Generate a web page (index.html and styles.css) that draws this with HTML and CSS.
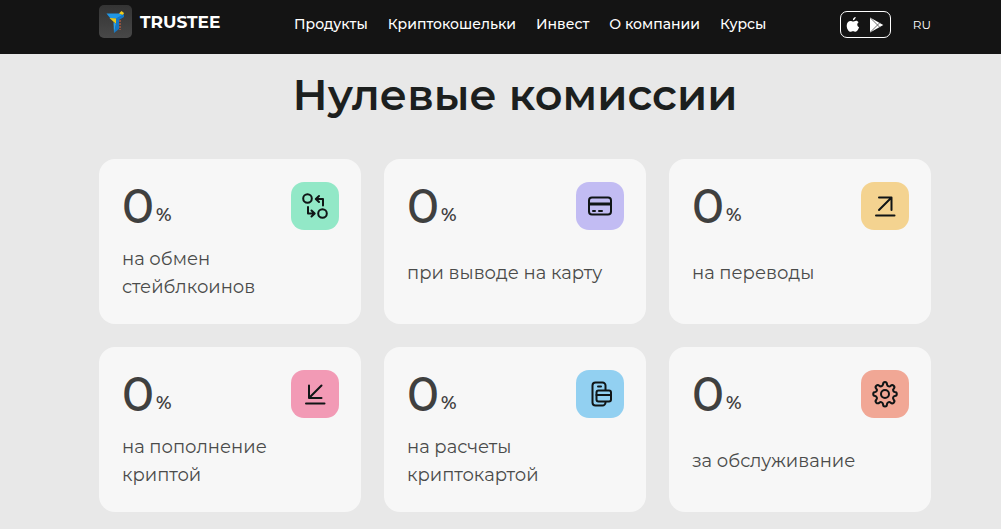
FILE: index.html
```html
<!DOCTYPE html>
<html lang="ru">
<head>
<meta charset="utf-8">
<meta name="viewport" content="width=device-width, initial-scale=1">
<title>Trustee — Нулевые комиссии</title>
<link rel="stylesheet" href="styles.css">
</head>
<body>
<header class="header">
  <a class="brand" href="#">
    <svg class="brand-logo" viewBox="0 0 33 33" aria-hidden="true">
      <defs><linearGradient id="tile" x1="0" y1="0" x2="0" y2="1"><stop offset="0" stop-color="#343434"/><stop offset="1" stop-color="#484848"/></linearGradient></defs>
      <rect width="33" height="33" rx="5" fill="url(#tile)"/>
      <path d="M7.500 8.500H20l4.500 1.500-7 3.500h-6z" fill="#2196e3"/>
      <path d="M20 8.500l2.500-2.500 2.500 2-1 2z" fill="#f2cf1d"/>
      <path d="M10.500 13l7.500.5-1 5.500z" fill="#e9c81c"/>
      <path d="M17 13.500l8-4.500v3l-5 3v9l-5 4 2-9z" fill="#1478c8"/>
      <path d="M14.500 17l2.500 2-2 9z" fill="#2aa2ee"/>
      <path d="M21 15v10" stroke="#a9583f" stroke-width="1.500" stroke-dasharray="2 1"/>
    </svg>
    <span class="brand-name">TRUSTEE</span>
  </a>
  <nav class="nav">
    <a href="#">Продукты</a>
    <a href="#">Криптокошельки</a>
    <a href="#">Инвест</a>
    <a href="#">О компании</a>
    <a href="#">Курсы</a>
  </nav>
  <div class="tools">
    <a class="stores" href="#" aria-label="Скачать приложение">
      <svg width="14" height="16" viewBox="0 0 14 16" fill="#fff" aria-hidden="true"><path d="M9.700 0c.1 1.400-1.200 3.200-2.800 3.200C6.700 1.700 8.200.2 9.700 0zM12.600 5.300c-1.900 1.200-1.700 4.100.5 5-.7 2-2 4.500-3.600 4.500-1 0-1.300-.6-2.500-.6s-1.600.6-2.500.6C2.600 14.800.7 11.500.7 8.700c0-2.900 1.800-4.800 3.800-4.800 1.100 0 1.900.7 2.600.7.700 0 1.700-.8 3-.8 1 0 1.900.6 2.500 1.500z"/></svg>
      <svg width="15" height="16" viewBox="0 0 15 16" aria-hidden="true"><path d="M1 .5v15L14.300 8z" fill="#fff"/><path d="M1.500 1L11 10.500M1.500 15L11 5.500" stroke="#444" stroke-width=".8" fill="none"/></svg>
    </a>
    <button class="lang" type="button">RU</button>
  </div>
</header>
<main class="main">
  <h1 class="title">Нулевые комиссии</h1>
  <div class="cards">
    <article class="card">
      <div class="card-top">
        <p class="rate">0<span class="percent">%</span></p>
        <span class="icon icon-mint"><svg viewBox="0 0 48 48"><circle cx="16.500" cy="16.500" r="4.300"/><circle cx="31.500" cy="31.500" r="4.300"/><path d="M32 23.500V17h-7m3-3l-3.200 3 3.200 3M17 25v6.500h6.500m-3-3l3.200 3-3.200 3"/></svg></span>
      </div>
      <p class="text">на обмен стейблкоинов</p>
    </article>
    <article class="card">
      <div class="card-top">
        <p class="rate">0<span class="percent">%</span></p>
        <span class="icon icon-violet"><svg viewBox="0 0 48 48"><rect x="13" y="15.500" width="22" height="17" rx="3"/><path d="M13 22h22" class="band"/><path d="M17 29h2m4 0h3"/></svg></span>
      </div>
      <p class="text">при выводе на карту</p>
    </article>
    <article class="card">
      <div class="card-top">
        <p class="rate">0<span class="percent">%</span></p>
        <span class="icon icon-yellow"><svg viewBox="0 0 48 48"><path d="M18 15.500h12.500V28M30.500 15.500L18 28M15 33.500h18.500"/></svg></span>
      </div>
      <p class="text">на переводы</p>
    </article>
    <article class="card">
      <div class="card-top">
        <p class="rate">0<span class="percent">%</span></p>
        <span class="icon icon-pink"><svg viewBox="0 0 48 48"><path d="M18 15.500V28h12.500M30.500 15.500L18 28M15 33.500h18.500"/></svg></span>
      </div>
      <p class="text">на пополнение криптой</p>
    </article>
    <article class="card">
      <div class="card-top">
        <p class="rate">0<span class="percent">%</span></p>
        <span class="icon icon-blue"><svg viewBox="0 0 48 48"><path d="M29.500 20v-4.500a3 3 0 0 0-3-3h-7a3 3 0 0 0-3 3v17a3 3 0 0 0 3 3h7a3 3 0 0 0 3-3M22 16.500h3"/><rect x="20.500" y="20.500" width="14.500" height="11" rx="2"/><path d="M20.500 25h14.500"/></svg></span>
      </div>
      <p class="text">на расчеты криптокартой</p>
    </article>
    <article class="card">
      <div class="card-top">
        <p class="rate">0<span class="percent">%</span></p>
        <span class="icon icon-coral"><svg viewBox="0 0 48 48"><circle cx="24" cy="24" r="4"/><path d="M22 14.500a2 2.500 0 0 1 4 0q.3 1.500 1.700 1.900 1.200.3 2-.6a2 2 0 0 1 3 3q-1 1-.5 2t1.600 1.200a2 2 0 0 1 0 4q-1.300.2-1.700 1.500-.3 1 .6 2.200a2 2 0 0 1-3 3q-1-1-2.200-.5-1.200.4-1.500 1.800a2 2.500 0 0 1-4 0q-.3-1.500-1.700-1.900-1-.3-2 .6a2 2 0 0 1-3-3q1-1 .5-2.200-.4-1.200-1.600-1.500a2 2 0 0 1 0-4q1.300-.2 1.700-1.300.4-1-.6-2a2 2 0 0 1 3-3q1 1 2.200.5 1.200-.4 1.500-1.700z"/></svg></span>
      </div>
      <p class="text">за обслуживание</p>
    </article>
  </div>
</main>
</body>
</html>
```
FILE: styles.css
```css
* { box-sizing: border-box; }
body {
  margin: 0;
  background: #e8e8e8;
  color: #1c1f1e;
  font-family: Montserrat, Inter, sans-serif;
}
p, h1 { margin: 0; }
a { color: inherit; text-decoration: none; }
.header {
  display: flex;
  align-items: flex-start;
  padding: 5px 70px 11px 99px;
  min-height: 54px;
  background: #141414;
  color: #fff;
}
.brand { display: flex; align-items: center; gap: 8px; width: 195px; }
.brand-logo { width: 33px; height: 33px; }
.brand-name { font-size: 17px; font-weight: 700; }
.nav {
  display: flex;
  gap: 20px;
  padding-top: 9px;
  font-size: 14px;
  line-height: 20px;
  font-weight: 500;
  white-space: nowrap;
}
.tools { display: flex; align-items: center; gap: 22px; margin-left: auto; padding-top: 6px; }
.stores {
  display: flex;
  align-items: center;
  justify-content: center;
  gap: 9px;
  width: 51px;
  height: 27px;
  border: 1px solid #fff;
  border-radius: 7px;
}
.lang { padding: 0; border: 0; background: none; color: #fff; font: 400 12px/18px Montserrat, Inter, sans-serif; }
.main { padding: 13px 70px 17px 99px; }
.title { font-size: 43px; line-height: 56px; font-weight: 600; text-align: center; }
.cards {
  display: grid;
  grid-template-columns: repeat(3, 1fr);
  gap: 23px;
  margin-top: 36px;
}
.card { padding: 23px 22px 22px 23px; border-radius: 16px; background: #f7f7f7; min-height: 165px; }
.card-top { display: flex; justify-content: space-between; height: 48px; }
.rate { display: flex; align-items: flex-end; font-size: 48px; line-height: 48px; font-weight: 500; color: #3f403f; }
.percent { margin-left: 2px; font-size: 18px; line-height: 30px; font-weight: 600; }
.icon { width: 48px; height: 48px; border-radius: 13px; }
.icon svg {
  display: block;
  fill: none;
  stroke: #101516;
  stroke-width: 2;
  stroke-linecap: round;
  stroke-linejoin: round;
}
.icon .band { stroke-width: 3; stroke-linecap: butt; }
.icon-mint { background: #92e8c7; }
.icon-violet { background: #c2bcf3; }
.icon-yellow { background: #f4d390; }
.icon-pink { background: #f29ab5; }
.icon-blue { background: #92d0f1; }
.icon-coral { background: #f1a795; }
.text {
  display: flex;
  align-items: center;
  min-height: 56px;
  margin-top: 15px;
  max-width: 200px;
  font-size: 18px;
  line-height: 28px;
  font-weight: 400;
  color: #4a4b4a;
}
```
